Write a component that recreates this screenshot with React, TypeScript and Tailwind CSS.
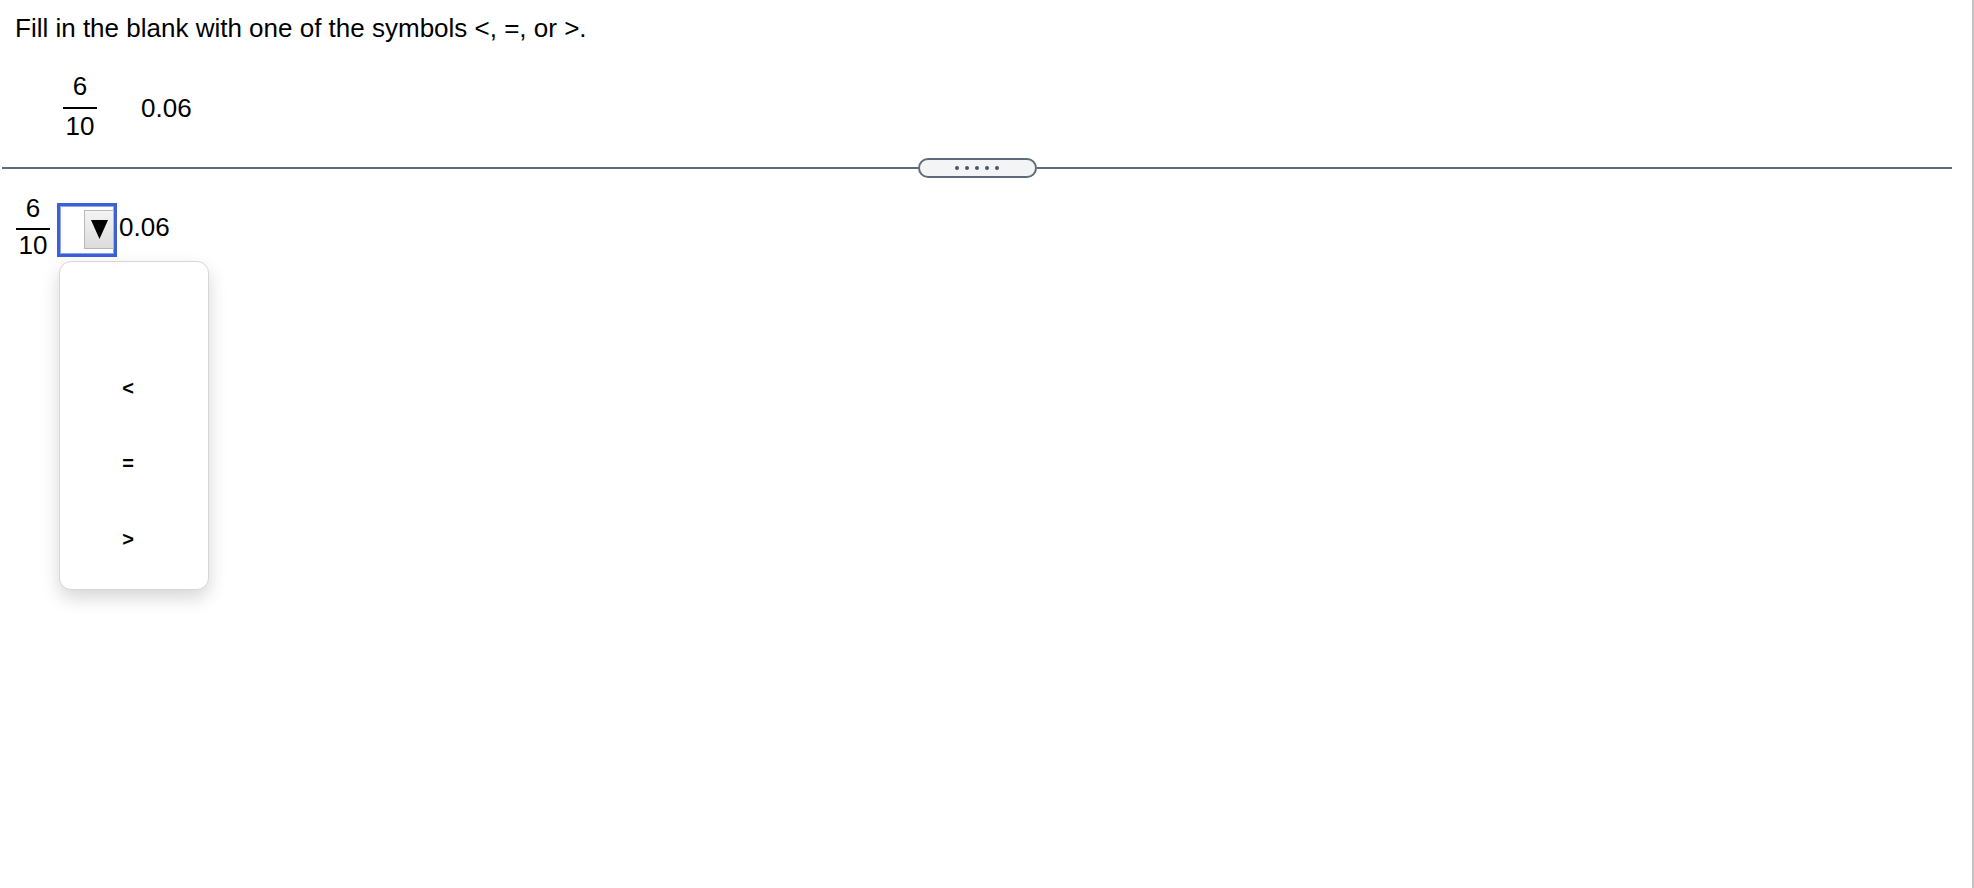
import React from "react";

function Fraction({ top, bottom, lead, gap }: { top: string; bottom: string; lead: string; gap: string }) {
  return (
    <div className="flex w-[34px] flex-col items-center">
      <div className={lead}>{top}</div>
      <div className={`h-[2px] w-full bg-black ${gap}`} />
      <div className={`${lead} mt-[2px]`}>{bottom}</div>
    </div>
  );
}

export default function App() {
  return (
    <div className="flex h-[888px] w-full overflow-hidden bg-white font-['Liberation_Sans',Arial,sans-serif] text-black">
      <div className="flex w-[1952px] flex-col">
        <div className="pl-[15px] pt-[13px] text-[26px] leading-[30px]">
          Fill in the blank with one of the symbols &lt;, =, or &gt;.
        </div>

        <div className="ml-[63px] mt-[28px] flex items-center text-[26px]">
          <Fraction top="6" bottom="10" lead="leading-[30px]" gap="mt-[6px]" />
          <div className="ml-[44px] mt-[4px] leading-[30px]">0.06</div>
        </div>

        <div className="mt-[17px] flex h-[20px] items-center pl-[2px]">
          <div className="h-[2px] flex-1 bg-[#5f6b7a]" />
          <div className="flex h-[20px] w-[119px] items-center justify-center gap-[6px] rounded-full border-2 border-[#5f6b7a] bg-[#f3f4f6]">
            <span className="h-[4px] w-[4px] rounded-full bg-[#4b5563]" />
            <span className="h-[4px] w-[4px] rounded-full bg-[#4b5563]" />
            <span className="h-[4px] w-[4px] rounded-full bg-[#4b5563]" />
            <span className="h-[4px] w-[4px] rounded-full bg-[#4b5563]" />
            <span className="h-[4px] w-[4px] rounded-full bg-[#4b5563]" />
          </div>
          <div className="h-[2px] flex-1 bg-[#5f6b7a]" />
        </div>

        <div className="ml-[16px] mt-[17px] flex items-start text-[26px]">
          <Fraction top="6" bottom="10" lead="leading-[26px]" gap="mt-[7px]" />
          <div className="relative ml-[7px] mt-[8px]">
            <div className="flex h-[54px] w-[60px] items-center justify-end border-[3px] border-[#3d60d4] bg-white shadow-[inset_0_0_0_1px_#8ea4ea]">
              <div className="mb-[1px] flex h-[39px] w-[30px] items-center justify-center border border-[#b8b8b8] bg-gradient-to-b from-[#f4f4f4] to-[#dcdcdc]">
                <svg width="17" height="19" viewBox="0 0 17 19">
                  <polygon points="0,0 17,0 8.5,19" fill="#000" />
                </svg>
              </div>
            </div>
            <div className="absolute left-[2px] top-[58px] flex h-[329px] w-[150px] flex-col rounded-[12px] border border-[#d6d6d6] bg-white py-[12px] pr-[12px] shadow-[0_8px_18px_rgba(0,0,0,0.16)]">
              <div className="flex h-[76px] items-center justify-center text-[20px] font-bold">&nbsp;</div>
              <div className="flex h-[76px] items-center justify-center text-[20px] font-bold">&lt;</div>
              <div className="flex h-[76px] items-center justify-center text-[20px] font-bold">=</div>
              <div className="flex h-[76px] items-center justify-center text-[20px] font-bold">&gt;</div>
            </div>
          </div>
          <div className="ml-[2px] mt-[17px] leading-[30px]">0.06</div>
        </div>
      </div>
      <div className="flex flex-1 justify-end">
        <div className="h-full w-[2px] bg-[#c4c4c4]" />
      </div>
    </div>
  );
}
